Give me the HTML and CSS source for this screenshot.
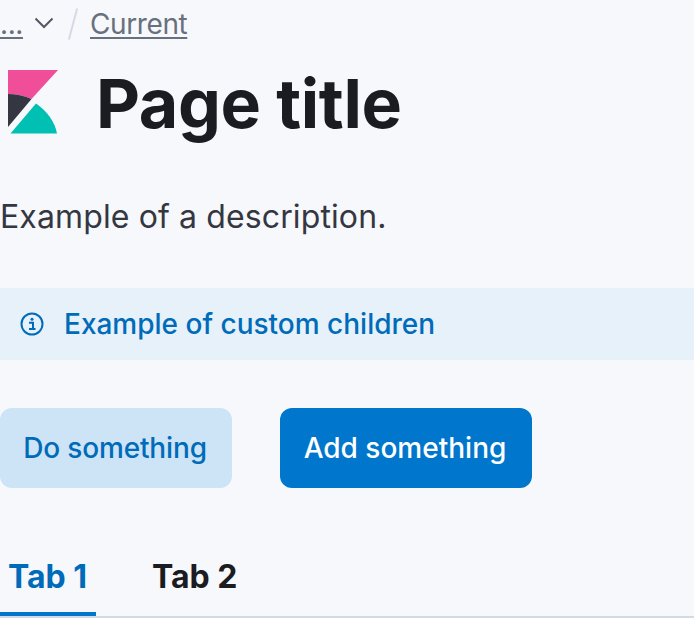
FILE: index.html
```html
<!DOCTYPE html>
<html>
<head>
	<meta charset="utf-8">
	<title>Page title</title>
	<link rel="stylesheet" href="styles.css">
</head>
<body>
<div class="page">
	<div class="crumbs">
		<a class="crumb-link">...</a>
		<svg class="chevron" width="20" height="12" viewBox="0 0 20 12"><path d="M1.500 1.500 L10 10 L18.500 1.500" fill="none" stroke="#535966" stroke-width="2"/></svg>
		<span class="sep"></span>
		<a class="crumb-link">Current</a>
	</div>
	<div class="title-row">
		<svg class="logo" width="50" height="64" viewBox="0 0 50 64">
			<path d="M0 0 H50 L23.500 29 C16 25.500 8 24 0 24 Z" fill="#f04e98"/>
			<path d="M0 24 C8 24 16 25.500 23.500 29 L0 57 Z" fill="#343741"/>
			<path d="M2.500 63.500 L28 33.500 C39 41 47 52 49 63.500 Z" fill="#00bfb3"/>
		</svg>
		<h1 class="title">Page title</h1>
	</div>
	<p class="desc">Example of a description.</p>
	<div class="callout">
		<svg class="info" width="24" height="24" viewBox="0 0 24 24">
			<circle cx="12" cy="12" r="10.500" fill="none" stroke="#006bb8" stroke-width="2"/>
			<circle cx="12" cy="7.200" r="1.500" fill="#006bb8"/>
			<path d="M9 10.800 H13 V16.800 M9 17 H15.500" fill="none" stroke="#006bb8" stroke-width="2"/>
		</svg>
		<span class="callout-text">Example of custom children</span>
	</div>
	<div class="actions">
		<button class="btn btn-light">Do something</button>
		<button class="btn btn-fill">Add something</button>
	</div>
	<div class="tabs">
		<div class="tab current">Tab 1</div>
		<div class="tab">Tab 2</div>
	</div>
</div>
</body>
</html>
```

FILE: styles.css
```css
html,body,h1,p{margin:0;padding:0;}
body{background:#f7f8fc;font-family:Inter,"Liberation Sans",sans-serif;color:#1a1c21;overflow:hidden;}
.page{width:694px;height:618px;display:flex;flex-direction:column;}

.crumbs{height:48px;display:flex;align-items:center;font-size:28px;color:#69707d;letter-spacing:-.4px;}
.crumb-link{text-decoration:underline;text-decoration-thickness:2px;text-underline-offset:3px;}
.chevron{margin-left:11px;margin-top:-2px;}
.sep{width:2px;height:32px;margin:0 16px 0 18px;background:#d3dae6;transform:rotate(15deg);}

.title-row{display:flex;align-items:flex-start;height:80px;margin-top:22px;}
.logo{margin-left:8px;flex:none;}
.title{margin-left:38px;font-size:68px;line-height:67px;font-weight:700;letter-spacing:-.4px;}

.desc{margin-top:47px;font-size:32px;line-height:40px;color:#343741;letter-spacing:.12px;}

.callout{margin-top:51px;height:72px;display:flex;align-items:center;gap:20px;padding-left:20px;background:#e6f1fa;color:#006bb8;font-size:28px;}
.callout-text{font-weight:500;}

.actions{margin-top:48px;display:flex;gap:48px;}
.btn{height:80px;padding:0 2px 0 0;border:none;border-radius:12px;white-space:nowrap;font:500 28px Inter,"Liberation Sans",sans-serif;}
.btn-light{background:#cce4f5;color:#006bb8;width:232px;letter-spacing:-.15px;}
.btn-fill{background:#0077cc;color:#fff;width:252px;}

.tabs{margin-top:48px;height:82px;display:flex;gap:40px;border-bottom:2px solid #d3dae6;box-sizing:border-box;}
.tab{padding:0 8px;height:80px;box-sizing:border-box;font-size:32px;font-weight:700;line-height:82px;}
.tab.current{color:#006bb8;border-bottom:4px solid #0077cc;width:96px;margin-right:8px;}
```
